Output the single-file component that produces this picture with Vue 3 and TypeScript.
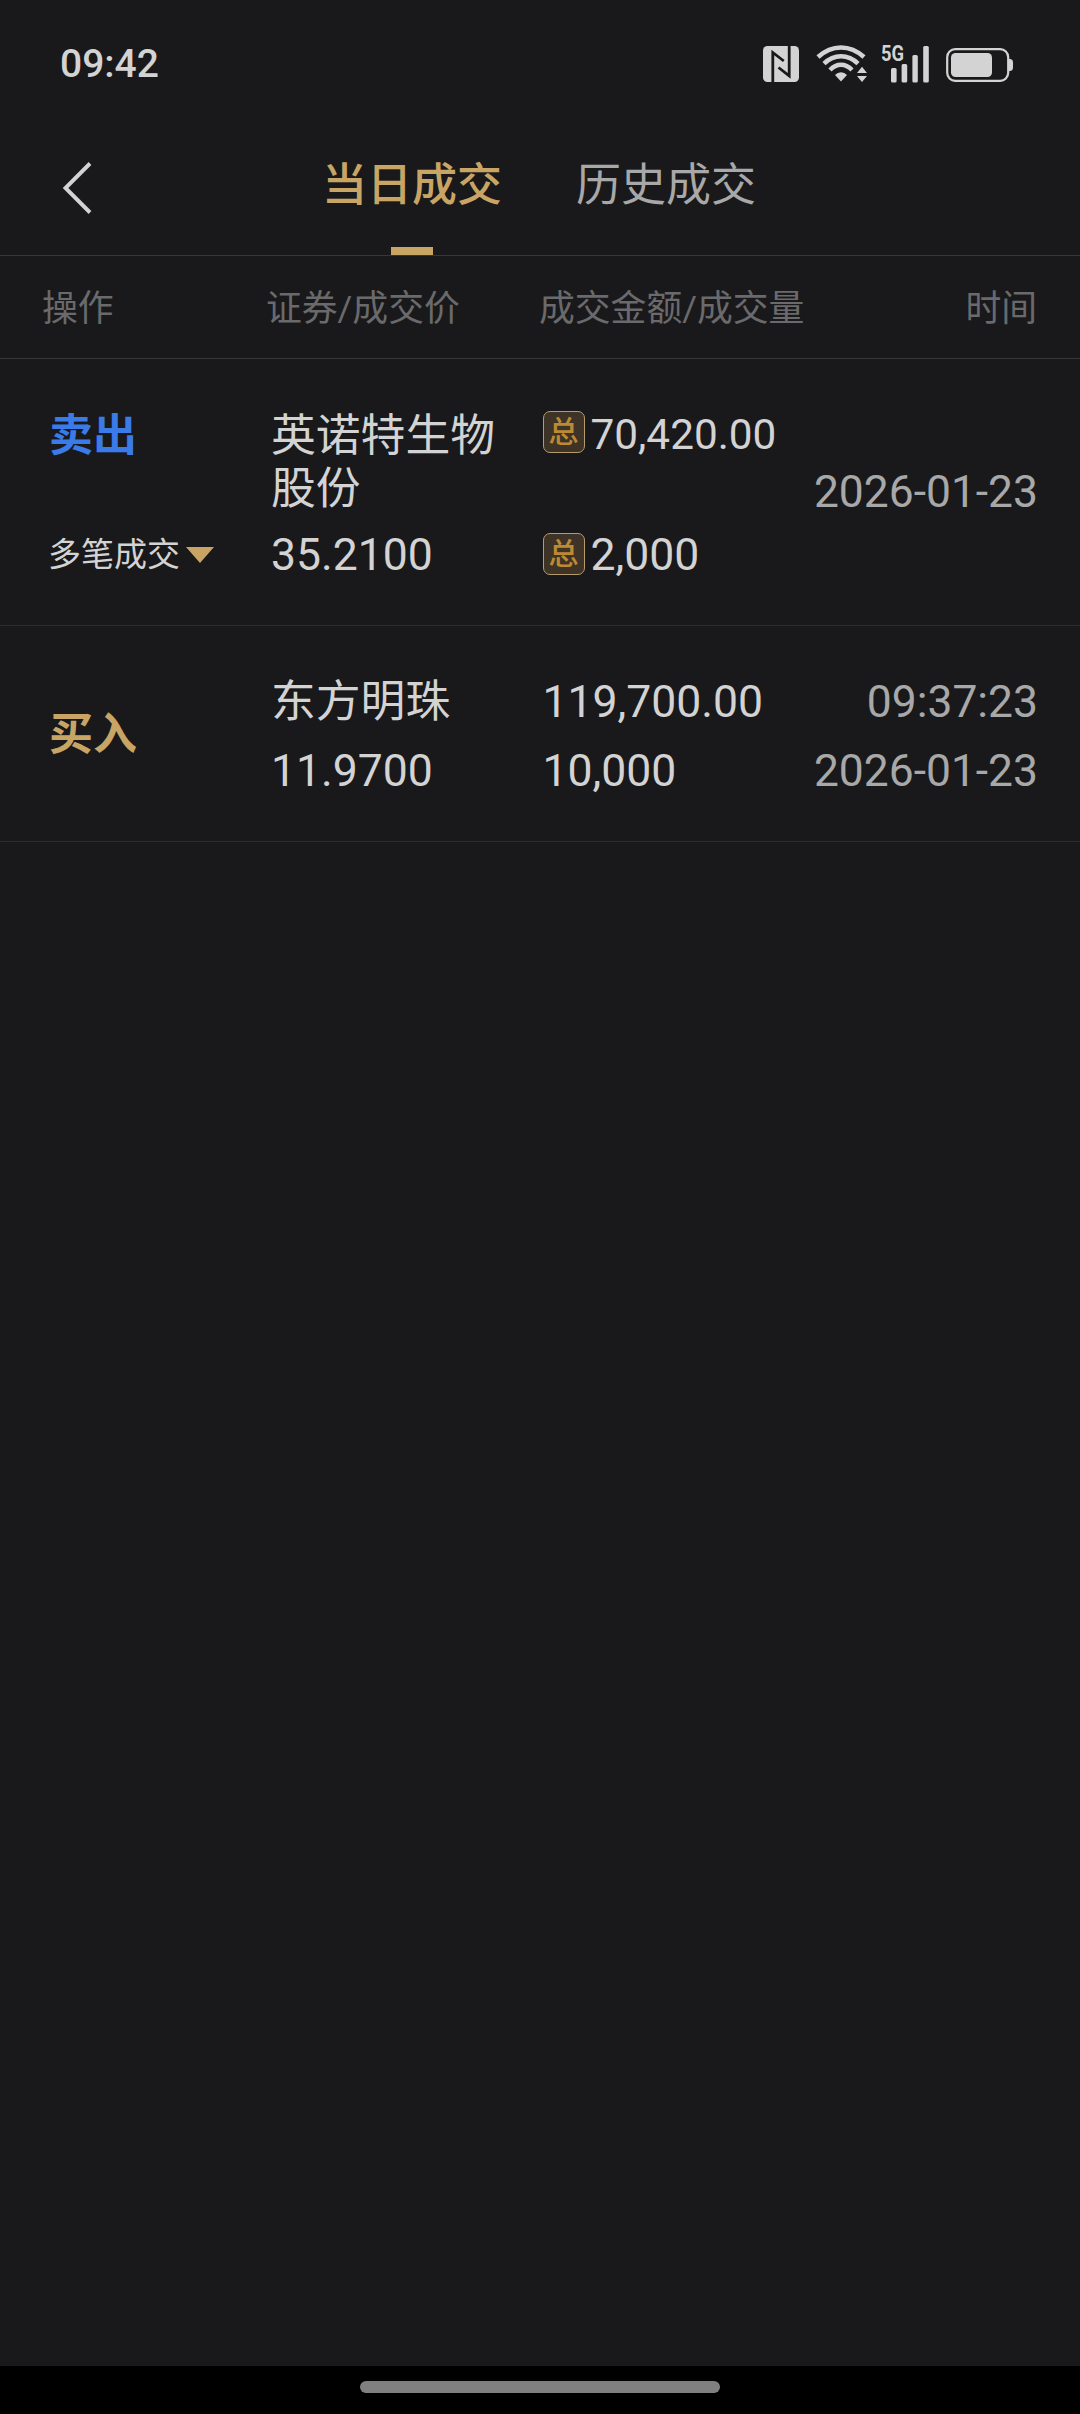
<script setup lang="ts">
interface Trade {
  side: 'sell' | 'buy'
  label: string
  multiple: boolean
  name: string
  price: string
  amount: string
  volume: string
  time: string
  date: string
}

const tabs = [
  { title: '当日成交', active: true },
  { title: '历史成交', active: false },
]

const trades: Trade[] = [
  {
    side: 'sell',
    label: '卖出',
    multiple: true,
    name: '英诺特生物股份',
    price: '35.2100',
    amount: '70,420.00',
    volume: '2,000',
    time: '',
    date: '2026-01-23',
  },
  {
    side: 'buy',
    label: '买入',
    multiple: false,
    name: '东方明珠',
    price: '11.9700',
    amount: '119,700.00',
    volume: '10,000',
    time: '09:37:23',
    date: '2026-01-23',
  },
]
</script>

<template>
  <div class="screen">
    <header class="status">
      <span class="clock">09:42</span>
      <div class="indicators">
        <svg class="nfc" width="36" height="36" viewBox="0 0 36 36">
          <rect width="36" height="36" rx="4.5" fill="#d3d3d3" />
          <path d="M9.800 36V6.500L20.800 15M26.200 0V29.800L15.500 21.500" fill="none" stroke="#19191b" stroke-width="2.800" />
        </svg>
        <svg class="wifi" width="52" height="38" viewBox="0 0 52 38">
          <g fill="none" stroke="#d3d3d3" stroke-width="4.500">
            <path d="M2 13Q12.500 3.400 25 3.400T48 13" />
            <path d="M8 19.600Q15.500 12.200 25 12.200T42 19.600" />
            <path d="M14 26Q19 20.800 25 20.800T36 26" />
          </g>
          <path d="M25 28.200Q28.500 28.200 31 31L25 37.500L19 31Q21.500 28.200 25 28.200Z" fill="#d3d3d3" />
          <path d="M46 22.800L51 29H41ZM41 32H51L46 38Z" fill="#d3d3d3" />
        </svg>
        <svg class="signal" width="49" height="38" viewBox="0 0 49 38">
          <text x="0" y="16.400" class="net" textLength="23" lengthAdjust="spacingAndGlyphs">5G</text>
          <g fill="#d3d3d3">
            <rect x="10" y="23" width="5.600" height="14.500" rx="1.500" />
            <rect x="20.600" y="19" width="5.600" height="18.500" rx="1.500" />
            <rect x="31.400" y="10" width="5.400" height="27.500" rx="1.500" />
            <rect x="42.200" y="1" width="5.600" height="36.500" rx="1.500" />
          </g>
        </svg>
        <svg class="battery" width="68" height="34" viewBox="0 0 68 34">
          <rect x="1.200" y="1.200" width="61" height="31.600" rx="8" fill="none" stroke="#d3d3d3" stroke-width="2.200" />
          <rect x="5" y="5" width="41" height="24" rx="4.500" fill="#d3d3d3" />
          <path d="M63 11H64.500Q67 11.500 67 14V20Q67 22.500 64.500 23H63Z" fill="#d3d3d3" />
        </svg>
      </div>
    </header>

    <nav class="nav">
      <svg class="back" width="32" height="54" viewBox="0 0 32 54">
        <path d="M30 2.500L5.500 27L30 51.500" fill="none" stroke="#d3d3d5" stroke-width="3.900" />
      </svg>
      <div class="tabs">
        <div v-for="tab in tabs" :key="tab.title" class="tab" :class="{ active: tab.active }">
          <span>{{ tab.title }}</span>
          <i v-if="tab.active" class="bar"></i>
        </div>
      </div>
    </nav>

    <div class="head">
      <span>操作</span>
      <span>证券/成交价</span>
      <span>成交金额/成交量</span>
      <span class="right">时间</span>
    </div>

    <main>
      <section v-for="trade in trades" :key="trade.name" class="trade" :class="trade.side">
        <div class="op">
          <b>{{ trade.label }}</b>
          <span v-if="trade.multiple" class="multi">
            多笔成交
            <svg width="28" height="16" viewBox="0 0 28 16"><path d="M0 0H28L14 16Z" fill="#c9a565" /></svg>
          </span>
        </div>
        <div class="stock">
          <span class="name">{{ trade.name }}</span>
          <span class="price">{{ trade.price }}</span>
        </div>
        <div class="sum">
          <span class="value amount"><em v-if="trade.multiple">总</em>{{ trade.amount }}</span>
          <span class="value"><em v-if="trade.multiple">总</em>{{ trade.volume }}</span>
        </div>
        <div class="when">
          <span v-if="trade.time">{{ trade.time }}</span>
          <span>{{ trade.date }}</span>
        </div>
      </section>
    </main>

    <footer class="gesture"><i></i></footer>
  </div>
</template>

<style>
body {
  margin: 0;
  background: #19191b;
}
</style>

<style scoped>
.screen {
  display: flex;
  flex-direction: column;
  width: 1080px;
  height: 2414px;
  background: #19191b;
  color: #d3d3d3;
  font-family: Roboto, "Noto Sans CJK SC", sans-serif;
  font-size: 44.8px;
  line-height: 53px;
  overflow: hidden;
}

.status {
  display: flex;
  justify-content: space-between;
  height: 120px;
  box-sizing: border-box;
  padding: 37px 66px 0 60px;
}

.clock {
  font-size: 39px;
  font-weight: 500;
  line-height: 55px;
}

.indicators {
  display: flex;
  align-items: flex-start;
}

.nfc {
  margin: 9px 17px 0 0;
}

.wifi {
  margin: 7px 13px 0 0;
}

.signal {
  margin: 8px 16px 0 0;
  overflow: visible;
}

.battery {
  margin-top: 11px;
}

.net {
  fill: #d3d3d3;
  font: 700 22px Roboto, sans-serif;
}

.nav {
  display: flex;
  height: 135px;
  border-bottom: 1px solid #363637;
}

.back {
  margin: 41px 0 0 60px;
}

.tabs {
  display: flex;
  margin-left: 230px;
  gap: 74px;
  font-size: 45px;
}

.tab {
  display: flex;
  flex-direction: column;
  align-items: center;
  justify-content: space-between;
  padding-top: 39px;
  color: #a8a8a8;
}

.active {
  color: #c9a565;
  font-weight: 500;
}

.bar {
  width: 42px;
  height: 8px;
  background: #c9a565;
}

.head,
.trade {
  display: grid;
}

.head {
  grid-template-columns: 224px 273px 1fr auto;
  height: 102px;
  padding: 0 43px 0 42px;
  border-bottom: 1px solid #363637;
  font-size: 35.8px;
  line-height: 107px;
  color: #6a6a6c;
}

.trade {
  grid-template-columns: 222px 270px 1fr auto;
  padding: 49px 42px 44px 49px;
  border-bottom: 1px solid #2d2d2e;
}

.trade.sell {
  padding-top: 50px;
}

.op,
.stock,
.sum,
.when {
  display: flex;
  flex-direction: column;
  justify-content: space-between;
  white-space: nowrap;
}

.op b {
  font-size: 44px;
  font-weight: 700;
  line-height: 55px;
}

.sell .op b {
  color: #3a7be8;
}

.buy .op {
  justify-content: center;
  padding-bottom: 2px;
}

.buy .op b {
  color: #c9a565;
}

.multi {
  display: flex;
  align-items: center;
  gap: 6px;
  margin-left: -1px;
  font-size: 33px;
}

.stock .name {
  width: 230px;
  white-space: normal;
}

.price {
  position: relative;
  top: 1px;
  font-size: 44.5px;
  margin-top: 16px;
}

.sell .price {
  margin-top: 13px;
}

.value {
  display: flex;
  align-items: center;
  padding-left: 1.5px;
  font-size: 44.5px;
}

.buy .value,
.when span,
.sell .value:not(.amount) {
  position: relative;
  top: 1px;
}

.sell .amount {
  font-size: 42.3px;
  line-height: 52px;
}

em {
  width: 42px;
  height: 42px;
  box-sizing: border-box;
  margin: 0 6px 4px 0;
  border: 1.5px solid #b69a6c;
  border-radius: 7px;
  background: #3d3327;
  color: #bd8a34;
  font-size: 30px;
  font-weight: 500;
  font-style: normal;
  line-height: 39px;
  text-align: center;
}

.amount em {
  margin-bottom: 6px;
}

.when {
  color: #a8a8a8;
  font-size: 44.4px;
  text-align: right;
}

.sell .when {
  justify-content: center;
  padding-bottom: 8px;
}

main {
  flex: 1;
}

.gesture {
  display: flex;
  justify-content: center;
  height: 48px;
  background: #000;
}

.gesture i {
  width: 360px;
  height: 12px;
  margin-top: 15px;
  border-radius: 6px;
  background: #808080;
}
</style>
